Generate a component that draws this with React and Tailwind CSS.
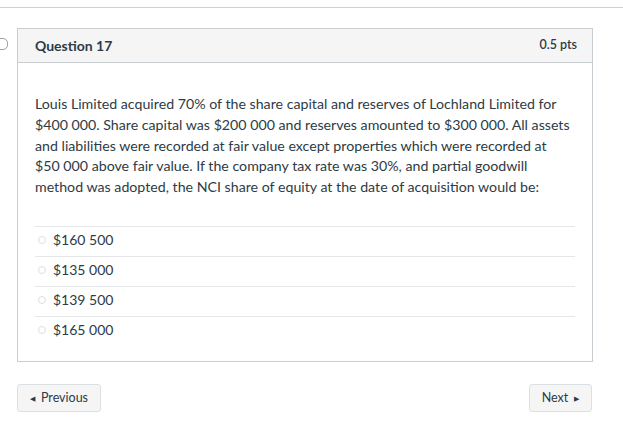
const answers = ["$160 500", "$135 000", "$139 500", "$165 000"];

const questionText =
  "Louis Limited acquired 70% of the share capital and reserves of Lochland Limited for $400\u00a0000. Share capital was $200\u00a0000 and reserves amounted to $300\u00a0000. All assets and liabilities were recorded at fair value except properties which were recorded at $50\u00a0000 above fair value. If the company tax rate was 30%, and partial goodwill method was adopted, the NCI share of equity at the date of acquisition would be:";

export default function App() {
  return (
    <div className="relative h-[425px] w-[623px] overflow-hidden bg-white text-[#2d3b45]" style={{ fontFamily: "Lato, 'Noto Sans', sans-serif" }}>
      <div className="h-[8px] border-b border-[#d0d0d0]" />

      <div className="absolute left-[-6px] top-[38px] h-[12px] w-[14px] rounded-[5px] border border-[#9aa0a6]" />

      <div className="ml-[17px] mt-[20px] w-[576px] border border-[#c7cdd1]">
        <div className="flex h-[34px] items-center justify-between border-b border-[#c7cdd1] bg-[#f5f5f5] pl-[17px] pr-[15px]">
          <span className="text-[14px] font-bold text-[#2d3b45]">Question 17</span>
          <span className="text-[12.5px] font-semibold text-[#2d3b45]">0.5 pts</span>
        </div>

        <div className="px-[17px] pb-[15px] pt-[31px]">
          <p className="text-[14.2px] leading-[20.8px] text-[#2d3b45]">{questionText}</p>

          <div className="mt-[28px]">
            {answers.map((answer) => (
              <div key={answer} className="flex h-[30px] items-center gap-[7px] border-t border-[#e4e6e8] pb-[3px] pl-[3px]">
                <span className="h-[8px] w-[8px] rounded-full border border-[#dcdfe2]" />
                <span className="text-[14px] text-[#2d3b45]">{answer}</span>
              </div>
            ))}
          </div>
        </div>
      </div>

      <div className="ml-[17px] mr-[31px] mt-[22px] flex justify-between">
        <button type="button" className="flex h-[28px] w-[84px] items-center justify-center gap-[6px] rounded-[3px] border border-[#dde0e3] bg-[#f5f5f5] text-[12.5px] text-[#2d3b45]">
          <span className="text-[7px]">◀</span>
          <span>Previous</span>
        </button>
        <button type="button" className="flex h-[28px] w-[63px] items-center justify-center gap-[6px] rounded-[3px] border border-[#dde0e3] bg-[#f5f5f5] text-[12.5px] text-[#2d3b45]">
          <span>Next</span>
          <span className="text-[7px]">▶</span>
        </button>
      </div>
    </div>
  );
}
